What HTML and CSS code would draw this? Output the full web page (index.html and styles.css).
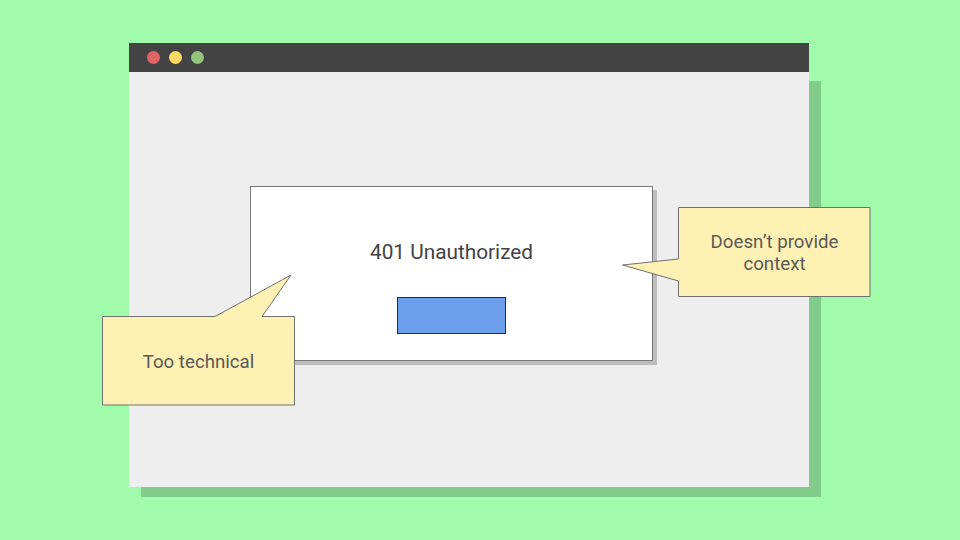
FILE: index.html
```html
<!DOCTYPE html>
<html>
<head>
<meta charset="utf-8">
<link rel="stylesheet" href="styles.css">
</head>
<body>
<div class="stage">
  <div class="window">
    <div class="titlebar">
      <span class="dot red"></span>
      <span class="dot yellow"></span>
      <span class="dot green"></span>
    </div>
    <div class="content">
      <div class="dialog">
        <div class="dialog-title">401 Unauthorized</div>
        <div class="dialog-button"></div>
      </div>
    </div>
  </div>

  <div class="callout callout-left">
    <svg class="bubble" viewBox="0 0 193 90" width="193" height="90">
      <path d="M0.5,0.5 H113 L189,-41 L160,0.5 H192.5 V89 H0.5 Z" />
    </svg>
    <span class="callout-text">Too technical</span>
  </div>

  <div class="callout callout-right">
    <svg class="bubble" viewBox="0 0 193 90" width="193" height="90">
      <path d="M0.5,0.5 H192 V89.5 H0.5 V74 L-55.5,58 L0.5,52 Z" />
    </svg>
    <span class="callout-text">Doesn’t provide<br>context</span>
  </div>
</div>
</body>
</html>
```

FILE: styles.css
```css
html, body {
  margin: 0;
  padding: 0;
}

body {
  background: #a0fcab;
  font-family: Roboto, "Liberation Sans", sans-serif;
  width: 960px;
  height: 540px;
  overflow: hidden;
}

.stage {
  position: relative;
  width: 960px;
  height: 540px;
  padding: 43px 0 0 129px;
  box-sizing: border-box;
}

.window {
  position: relative;
  width: 680px;
  height: 444px;
  display: flex;
  flex-direction: column;
}

.window::before {
  content: "";
  position: absolute;
  left: 12px;
  top: 38px;
  right: -12px;
  bottom: -10px;
  background: #81cb8b;
  z-index: -1;
}

.titlebar {
  height: 29px;
  background: #434343;
  display: flex;
  align-items: center;
  padding-left: 18px;
  gap: 9px;
  flex: none;
}

.dot {
  width: 13px;
  height: 13px;
  border-radius: 50%;
  display: block;
}

.red { background: #e06666; }
.yellow { background: #ffd966; }
.green { background: #93c47d; }

.content {
  flex: 1;
  background: #eeeeee;
  padding-top: 114px;
  padding-left: 121px;
}

.dialog {
  width: 403px;
  height: 175px;
  box-sizing: border-box;
  background: #ffffff;
  border: 1px solid #777777;
  box-shadow: 4px 4px 0 #bdbdbd;
  display: flex;
  flex-direction: column;
  align-items: center;
  padding-top: 52px;
}

.dialog-title {
  font-size: 20.8px;
  line-height: 26px;
  color: #434343;
  height: 26px;
}

.dialog-button {
  margin-top: 32px;
  width: 107px;
  height: 35px;
  background: #6d9eeb;
  border: 1px solid #1c2b46;
}

.callout {
  position: absolute;
  display: flex;
  align-items: center;
  justify-content: center;
  text-align: center;
  font-size: 18.7px;
  line-height: 22px;
  color: #595959;
  box-sizing: border-box;
  padding-top: 2px;
}

.callout-left {
  left: 102px;
  top: 316px;
  width: 193px;
  height: 90px;
}

.callout-right {
  left: 678px;
  top: 207px;
  width: 193px;
  height: 90px;
}

.bubble {
  position: absolute;
  left: 0;
  top: 0;
  overflow: visible;
}

.bubble path {
  fill: #fff1b3;
  stroke: #707070;
  stroke-width: 1;
}

.callout-text {
  position: relative;
}
```
